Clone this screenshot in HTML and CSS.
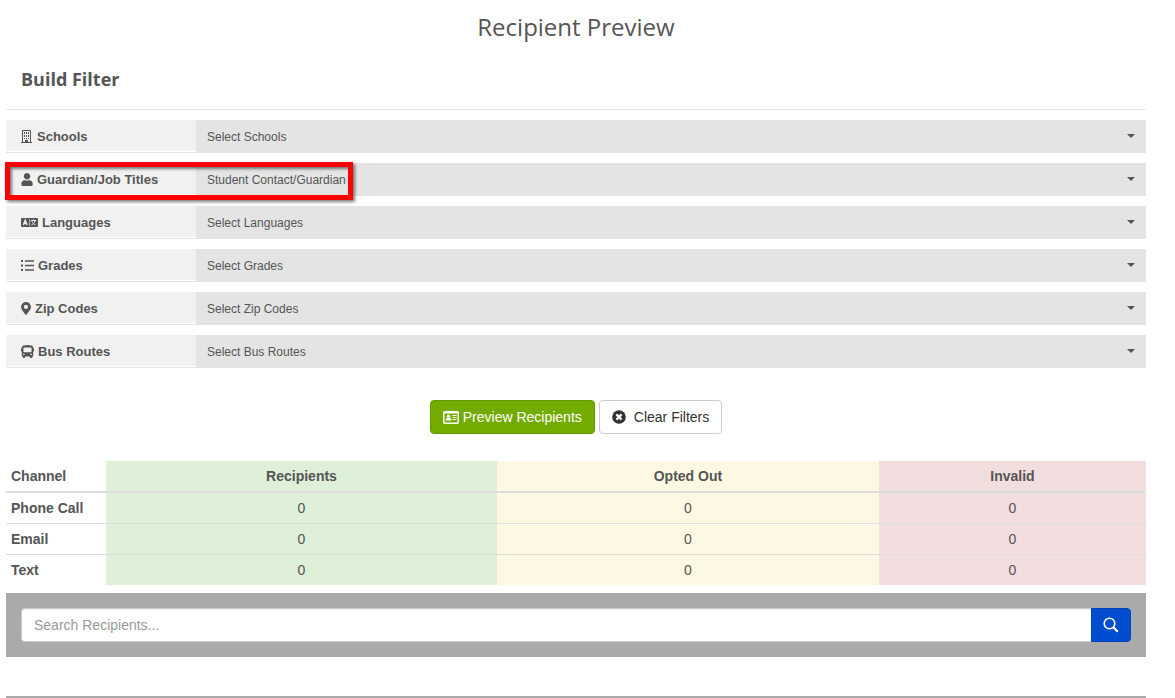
FILE: index.html
```html
<!DOCTYPE html>
<html lang="en">
<head>
<meta charset="utf-8">
<meta name="viewport" content="width=device-width, initial-scale=1">
<title>Recipient Preview</title>
<link rel="stylesheet" href="styles.css">
</head>
<body>
<main class="page">
  <h1 class="page-title">Recipient Preview</h1>
  <h2 class="section-title">Build Filter</h2>

  <form class="filters">
    <div class="filter">
      <label class="filter-label" for="schools">
        <svg class="icon" width="12" height="13" viewBox="0 0 12 13" aria-hidden="true"><path fill="none" stroke="currentColor" d="M1.500 12V.5h8V12M0 12.500h11"/><path fill="currentColor" d="M3 2h1v2H3zM5 2h1v2H5zM7 2h1v2H7zM3 5h1v2H3zM5 5h1v2H5zM7 5h1v2H7zM3 8h1v1H3zM5 8h1v1H5zM7 8h1v1H7zM4 10h3v2H4z"/></svg>
        <span>Schools</span>
      </label>
      <div class="filter-control"><select id="schools"><option>Select Schools</option></select></div>
    </div>
    <div class="filter filter-highlighted">
      <label class="filter-label" for="titles">
        <svg class="icon" width="12" height="13" viewBox="0 0 448 512" aria-hidden="true"><path fill="currentColor" d="M224 256c70.700 0 128-57.300 128-128S294.700 0 224 0 96 57.300 96 128s57.300 128 128 128zm89.600 32h-16.700c-22.200 10.200-46.900 16-72.900 16s-50.600-5.800-72.900-16h-16.700C60.200 288 0 348.200 0 422.400V464c0 26.500 21.500 48 48 48h352c26.500 0 48-21.500 48-48v-41.600c0-74.200-60.200-134.400-134.400-134.400z"/></svg>
        <span>Guardian/Job Titles</span>
      </label>
      <div class="filter-control"><select id="titles"><option>Student Contact/Guardian</option></select></div>
    </div>
    <div class="filter">
      <label class="filter-label" for="languages">
        <svg class="icon" width="17" height="9" viewBox="0 0 17 9" aria-hidden="true"><rect width="17" height="9" rx="1" fill="currentColor"/><path stroke="#f1f1f1" stroke-width=".6" d="M8.500 1v7"/><path fill="none" stroke="#f1f1f1" stroke-width="1.300" d="M2.300 7 4.200 2 6.100 7M3 5.500h2.500"/><path fill="none" stroke="#f1f1f1" d="M10 2.500h5M12.500 1.500v1M14 3c-.5 2-2 3.500-3.500 4M11 3.500c.5 1.500 2 3 3.500 3.500"/></svg>
        <span>Languages</span>
      </label>
      <div class="filter-control"><select id="languages"><option>Select Languages</option></select></div>
    </div>
    <div class="filter">
      <label class="filter-label" for="grades">
        <svg class="icon" width="13" height="11" viewBox="0 0 13 11" aria-hidden="true"><path fill="currentColor" d="M0 0h2v2H0zM0 4.500h2v2H0zM0 9h2v2H0zM4 .3h9v1.500H4zM4 4.800h9v1.500H4zM4 9.300h9v1.500H4z"/></svg>
        <span>Grades</span>
      </label>
      <div class="filter-control"><select id="grades"><option>Select Grades</option></select></div>
    </div>
    <div class="filter">
      <label class="filter-label" for="zips">
        <svg class="icon" width="10" height="13" viewBox="0 0 384 512" aria-hidden="true"><path fill="currentColor" d="M172.300 501.700C27 291 0 269.400 0 192 0 86 86 0 192 0s192 86 192 192c0 77.400-27 99-172.300 309.700-9.500 13.800-29.900 13.800-39.400 0zM192 272c44.200 0 80-35.800 80-80s-35.800-80-80-80-80 35.800-80 80 35.800 80 80 80z"/></svg>
        <span>Zip Codes</span>
      </label>
      <div class="filter-control"><select id="zips"><option>Select Zip Codes</option></select></div>
    </div>
    <div class="filter">
      <label class="filter-label" for="routes">
        <svg class="icon" width="13" height="13" viewBox="0 0 512 512" aria-hidden="true"><path fill="currentColor" fill-rule="evenodd" d="M488 128h-8V80c0-44.800-99.200-80-224-80S32 35.200 32 80v48h-8c-13.300 0-24 10.700-24 24v80c0 13.300 10.700 24 24 24h8v160c0 17.700 14.300 32 32 32v32c0 17.700 14.300 32 32 32h32c17.700 0 32-14.300 32-32v-32h192v32c0 17.700 14.300 32 32 32h32c17.700 0 32-14.300 32-32v-32h6.400c16 0 25.600-12.800 25.600-25.600V256h8c13.300 0 24-10.700 24-24v-80c0-13.300-10.700-24-24-24zM112 400a32 32 0 1 1 0-64 32 32 0 0 1 0 64zm16-112c-17.700 0-32-14.300-32-32V128c0-17.700 14.300-32 32-32h256c17.700 0 32 14.300 32 32v128c0 17.700-14.300 32-32 32H128zm272 112a32 32 0 1 1 0-64 32 32 0 0 1 0 64z"/></svg>
        <span>Bus Routes</span>
      </label>
      <div class="filter-control"><select id="routes"><option>Select Bus Routes</option></select></div>
    </div>
  </form>

  <div class="actions">
    <button class="btn btn-preview" type="button">
      <svg width="16" height="13" viewBox="0 0 16 13" aria-hidden="true"><rect x=".75" y=".75" width="14.500" height="11.500" rx="1" fill="none" stroke="currentColor" stroke-width="1.500"/><path fill="currentColor" d="M1 1h14v1.500H1zM9.500 4h4v1h-4zM9.500 6h4v1h-4zM9.500 8h4v1h-4zM2.500 9.500c0-2 1-2.500 3-2.500s3 .5 3 2.500z"/><circle cx="5.500" cy="5.200" r="1.800" fill="currentColor"/></svg>
      <span>Preview Recipients</span>
    </button>
    <button class="btn btn-clear" type="button">
      <svg width="14" height="14" viewBox="0 0 14 14" aria-hidden="true"><circle cx="7" cy="7" r="6.800" fill="currentColor"/><path stroke="#fff" stroke-width="2.200" d="m4.400 4.400 5.200 5.200m0-5.200L4.400 9.600"/></svg>
      <span>Clear Filters</span>
    </button>
  </div>

  <table class="summary">
    <thead>
      <tr><th class="channel" scope="col">Channel</th><th class="recipients" scope="col">Recipients</th><th class="opted-out" scope="col">Opted Out</th><th class="invalid" scope="col">Invalid</th></tr>
    </thead>
    <tbody>
      <tr><th class="channel" scope="row">Phone Call</th><td class="recipients">0</td><td class="opted-out">0</td><td class="invalid">0</td></tr>
      <tr><th class="channel" scope="row">Email</th><td class="recipients">0</td><td class="opted-out">0</td><td class="invalid">0</td></tr>
      <tr><th class="channel" scope="row">Text</th><td class="recipients">0</td><td class="opted-out">0</td><td class="invalid">0</td></tr>
    </tbody>
  </table>

  <form class="search">
    <input class="search-input" type="text" placeholder="Search Recipients..." aria-label="Search Recipients">
    <button class="search-button" type="button" aria-label="Search">
      <svg width="16" height="16" viewBox="0 0 16 16" aria-hidden="true"><circle cx="6.500" cy="6.500" r="5.300" fill="none" stroke="currentColor" stroke-width="1.600"/><path stroke="currentColor" stroke-width="2" d="m10.300 10.300 4.500 4.500"/></svg>
    </button>
  </form>
  <hr class="divider">
</main>
</body>
</html>
```
FILE: styles.css
```css
*, *::before, *::after { box-sizing: border-box; }

body {
  margin: 0;
  background: #fff;
  color: #555;
  font: 14px/20px "Liberation Sans", Arial, sans-serif;
}

button, input, select { font: inherit; }

.page { padding: 10px 29px 0 6px; }

.page-title {
  margin: 0;
  font: 400 24px/34px "Open Sans", sans-serif;
  text-align: center;
}

.section-title {
  margin: 0 0 10px;
  padding: 20px 15px 15px;
  border-bottom: 1px solid #e4e4e4;
  font: 700 18px/30px "Open Sans", sans-serif;
}

.filters {
  display: grid;
  gap: 10px;
}

.filter {
  position: relative;
  display: grid;
  grid-template-columns: 190px 1fr;
  height: 33px;
}

.filter-label {
  display: flex;
  align-items: center;
  gap: 4px;
  padding: 0 15px;
  border-bottom: 1px solid #e4e4e4;
  background: #f1f1f1;
  box-shadow: inset 0 -1px #fff;
  font-size: 13px;
  font-weight: 700;
}

.filter-label span { padding-top: 2px; }

.icon { flex: none; }

.filter-control { position: relative; }

.filter-control select {
  appearance: none;
  width: 100%;
  height: 100%;
  padding: 0 28px 0 11px;
  border: 0;
  border-radius: 0;
  background: #e4e4e4;
  color: #555;
  font-size: 12px;
}

.filter-control::after {
  content: "";
  position: absolute;
  top: 14px;
  right: 11px;
  border: 4px solid transparent;
  border-top-color: #555;
  border-bottom: 0;
  pointer-events: none;
}

.filter-highlighted::after {
  content: "";
  position: absolute;
  z-index: 1;
  top: -1px;
  left: -1px;
  width: 348px;
  height: 38px;
  border: 5px solid #f00;
  box-shadow: 2px 2px 3px rgba(0, 0, 0, .5), inset 2px 2px 3px rgba(0, 0, 0, .5);
  pointer-events: none;
}

.actions {
  display: flex;
  justify-content: center;
  gap: 4px;
  margin: 32px 0 27px;
}

.btn {
  display: flex;
  align-items: center;
  height: 34px;
  padding: 0 12px;
  border: 1px solid;
  border-radius: 4px;
}

.btn-preview {
  gap: 4px;
  border-color: #659900;
  background: #73ab00;
  color: #fff;
}

.btn-clear {
  gap: 8px;
  border-color: #ccc;
  background: #fff;
  color: #333;
}

.summary {
  width: 100%;
  border-collapse: separate;
  border-spacing: 0;
  table-layout: fixed;
}

.summary th, .summary td {
  padding: 5px;
  border-top: 1px solid #ddd;
  text-align: center;
}

.summary thead th {
  border-top: 0;
  border-bottom: 2px solid #ddd;
}

.summary tbody tr:first-child > * { border-top: 0; }
.summary .channel { width: 100px; text-align: left; }
.summary .recipients { width: 34.300%; background: #dff0d8; }
.summary .opted-out { width: 33.500%; background: #fcf8e3; }
.summary .invalid { background: #f2dede; }

.search {
  display: flex;
  margin: 8px 0 39px;
  padding: 15px;
  background: #aaa;
}

.search-input {
  flex: 1;
  min-width: 0;
  height: 34px;
  padding: 0 12px;
  border: 1px solid #ccc;
  border-right: 0;
  border-radius: 4px 0 0 4px;
  background: #fff;
  color: #555;
  box-shadow: inset 0 1px 1px rgba(0, 0, 0, .08);
}

.search-input::placeholder { color: #999; opacity: 1; }

.search-button {
  display: grid;
  place-items: center;
  width: 40px;
  padding: 0;
  border: 1px solid #0043b8;
  border-radius: 0 4px 4px 0;
  background: #004dcf;
  color: #fff;
}

.divider {
  margin: 0;
  border: 0;
  border-top: 2px solid #aaa;
}
```
